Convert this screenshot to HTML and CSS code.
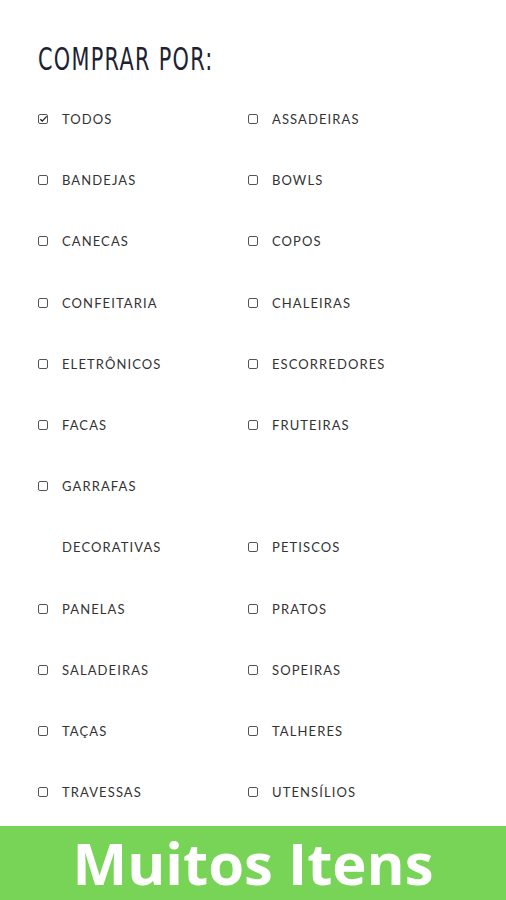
FILE: index.html
```html
<!DOCTYPE html>
<html lang="pt">
<head>
<meta charset="utf-8">
<link rel="stylesheet" href="styles.css">
</head>
<body>
<div class="page">
  <h1 class="title">COMPRAR POR:</h1>
  <div class="grid">
    <div class="item"><span class="box checked"><svg viewBox="0 0 10 10" width="10" height="10"><path d="M2.3 5.2 L4.3 7.1 L8.6 2.4" fill="none" stroke="#222" stroke-width="1.4"/></svg></span><span class="label">TODOS</span></div>
    <div class="item"><span class="box"></span><span class="label">ASSADEIRAS</span></div>
    <div class="item"><span class="box"></span><span class="label">BANDEJAS</span></div>
    <div class="item"><span class="box"></span><span class="label">BOWLS</span></div>
    <div class="item"><span class="box"></span><span class="label">CANECAS</span></div>
    <div class="item"><span class="box"></span><span class="label">COPOS</span></div>
    <div class="item"><span class="box"></span><span class="label">CONFEITARIA</span></div>
    <div class="item"><span class="box"></span><span class="label">CHALEIRAS</span></div>
    <div class="item"><span class="box"></span><span class="label">ELETRÔNICOS</span></div>
    <div class="item"><span class="box"></span><span class="label">ESCORREDORES</span></div>
    <div class="item"><span class="box"></span><span class="label">FACAS</span></div>
    <div class="item"><span class="box"></span><span class="label">FRUTEIRAS</span></div>
    <div class="item"><span class="box"></span><span class="label">GARRAFAS</span></div>
    <div class="item"></div>
    <div class="item"><span class="nobox"></span><span class="label">DECORATIVAS</span></div>
    <div class="item"><span class="box"></span><span class="label">PETISCOS</span></div>
    <div class="item"><span class="box"></span><span class="label">PANELAS</span></div>
    <div class="item"><span class="box"></span><span class="label">PRATOS</span></div>
    <div class="item"><span class="box"></span><span class="label">SALADEIRAS</span></div>
    <div class="item"><span class="box"></span><span class="label">SOPEIRAS</span></div>
    <div class="item"><span class="box"></span><span class="label">TAÇAS</span></div>
    <div class="item"><span class="box"></span><span class="label">TALHERES</span></div>
    <div class="item"><span class="box"></span><span class="label">TRAVESSAS</span></div>
    <div class="item"><span class="box"></span><span class="label">UTENSÍLIOS</span></div>
  </div>
</div>
<div class="banner">Muitos Itens</div>
</body>
</html>
```
FILE: styles.css
```css
html, body {
  margin: 0;
  padding: 0;
  background: #fff;
}
body {
  width: 506px;
  height: 900px;
  overflow: hidden;
  display: flex;
  flex-direction: column;
}
.page {
  flex: 1;
  min-height: 0;
  overflow: hidden;
  padding: 40px 0 0 38px;
}
.title {
  margin: 0;
  font-family: "DejaVu Sans", sans-serif;
  font-weight: normal;
  font-size: 32px;
  letter-spacing: 2px;
  color: #1d2233;
  line-height: 38px;
  width: max-content;
  transform: scaleX(0.65);
  transform-origin: left center;
}
.grid {
  display: grid;
  grid-template-columns: 210px 210px;
  grid-auto-rows: 61.2px;
  margin-top: 22px;
}
.item {
  display: flex;
  align-items: center;
  height: 38px;
}
.box, .nobox {
  width: 10px;
  height: 10px;
  flex: none;
  margin-right: 14px;
  box-sizing: border-box;
}
.box {
  border: 1.3px solid #555;
  border-radius: 2px;
  position: relative;
}
.box svg {
  position: absolute;
  left: -1px;
  top: -1px;
}
.label {
  font-family: "Lato", "Open Sans", sans-serif;
  font-size: 13px;
  letter-spacing: 1.1px;
  color: #333;
}
.banner {
  flex: none;
  height: 74px;
  background: #77d456;
  color: #fff;
  font-family: "Open Sans", sans-serif;
  font-weight: 700;
  font-size: 58px;
  text-align: center;
  line-height: 74px;
}
```
